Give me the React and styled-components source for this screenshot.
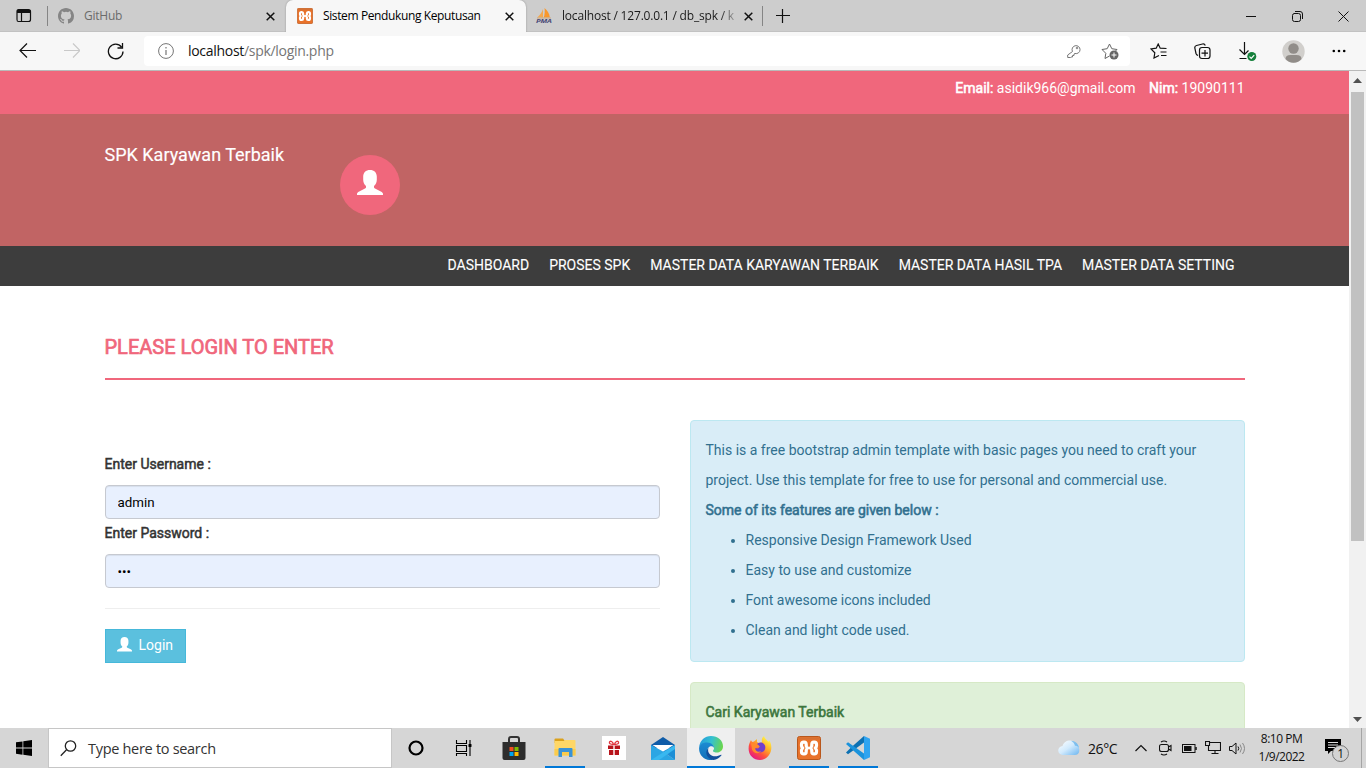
import React from "react";
import styled, { createGlobalStyle, css } from "styled-components";

const GlobalStyle = createGlobalStyle`
  *, *::before, *::after { box-sizing: border-box; }
  body { margin: 0; overflow: hidden; font-family: Roboto, sans-serif; }
  svg { display: block; flex: none; }
`;

const ui = `"Open Sans", "Noto Sans", sans-serif`;

const Screen = styled.div`
  width: 1366px;
  height: 768px;
  display: flex;
  flex-direction: column;
  background: #fff;
  overflow: hidden;
`;

/* ---------- browser chrome ---------- */

const TabStrip = styled.div`
  height: 32px;
  flex: none;
  display: flex;
  background: #cdcdcd;
  box-shadow: inset 0 -1px 0 #c2c2c2;
  font-family: ${ui};
`;

const TabMenu = styled.div`
  width: 48px;
  padding: 8px 0 0 16px;
`;

const Divider = styled.div`
  width: 1px;
  height: 20px;
  margin: 6px 0 0 -1px;
  background: #858585;
`;

const Tab = styled.div`
  width: ${(p) => p.$width}px;
  height: 32px;
  display: flex;
  align-items: center;
  padding: 0 ${(p) => p.$right}px 0 ${(p) => p.$left}px;
  gap: 10px;
  font-size: 12px;
  letter-spacing: ${(p) => p.$spacing}px;
  color: ${(p) => (p.$muted ? "#6b6b6b" : "#1a1a1a")};
  ${(p) =>
    p.$active &&
    css`
      background: #f7f7f7;
      border-radius: 7px 7px 0 0;
      box-shadow: 0 0 2px rgba(0, 0, 0, 0.3);
      color: #000;
    `}
`;

const TabTitle = styled.span`
  flex: 1;
  min-width: 0;
  white-space: nowrap;
  line-height: 20px;
  ${(p) =>
    p.$fade &&
    css`
      mask-image: linear-gradient(90deg, #000 158px, transparent 178px);
    `}
`;

const NewTab = styled.div`
  flex: 1;
  padding: 9px 0 0 13px;
`;

const WindowControls = styled.div`
  display: flex;
  width: 138px;
  & > span {
    width: 46px;
    height: 32px;
    display: grid;
    place-items: center;
  }
`;

const Toolbar = styled.div`
  height: 39px;
  flex: none;
  display: flex;
  align-items: center;
  background: #f7f7f7;
  border-bottom: 1px solid #b9b9b9;
`;

const NavButtons = styled.div`
  width: 144px;
  display: flex;
  align-items: center;
  gap: 27px;
  padding-left: 19px;
`;

const AddressBar = styled.div`
  width: 986px;
  height: 30px;
  display: flex;
  align-items: center;
  background: #fff;
  border-radius: 4px;
  padding: 0 11px 0 14px;
  font-family: ${ui};
  font-size: 14px;
  letter-spacing: -0.3px;
  color: #111;
  em {
    font-style: normal;
    color: #757575;
  }
`;

const Address = styled.span`
  flex: 1;
  padding-left: 14px;
  line-height: 20px;
`;

const AddressIcons = styled.div`
  display: flex;
  align-items: center;
  gap: 20px;
`;

const ToolIcons = styled.div`
  flex: 1;
  display: grid;
  grid-template-columns: 46px 43px 48px 42px 49px;
  justify-items: center;
  align-items: center;
  padding-left: 5px;
`;

/* ---------- page ---------- */

const Viewport = styled.div`
  flex: 1;
  min-height: 0;
  display: flex;
`;

const Page = styled.main`
  width: 1349px;
  overflow: hidden;
  color: #333;
  font-size: 14px;
`;

const Container = styled.div`
  width: 1170px;
  margin: 0 auto;
  padding: 0 15px;
`;

const Strong = styled.strong`
  font-weight: 400;
  -webkit-text-stroke: 0.55px currentColor;
`;

const ContactBar = styled.header`
  height: 43px;
  background: #f0677c;
  color: #fff;
  line-height: 20px;
  padding-top: 7px;
  ${Container} {
    display: flex;
    justify-content: flex-end;
    gap: 13.5px;
  }
`;

const Banner = styled.div`
  height: 132px;
  background: #c16464;
  ${Container} {
    display: flex;
  }
`;

const Brand = styled.div`
  width: 235.5px;
  padding-top: 31px;
  font-size: 18px;
  line-height: 20px;
  color: #fff;
  white-space: nowrap;
  -webkit-text-stroke: 0.15px currentColor;
`;

const Avatar = styled.div`
  width: 60px;
  height: 60px;
  margin-top: 41px;
  padding: 15px 0 0 17px;
  border-radius: 50%;
  background: #f0677c;
`;

const Menu = styled.nav`
  height: 40px;
  background: #3d3d3d;
  ${Container} {
    display: flex;
    justify-content: flex-end;
  }
`;

const MenuItem = styled.a`
  padding: 9px 10px 0;
  line-height: 20px;
  color: #fff;
  white-space: nowrap;
  -webkit-text-stroke: 0.1px currentColor;
`;

const Title = styled.h4`
  margin: 49px 0 40px;
  height: 45px;
  border-bottom: 2px solid #f0677c;
  color: #f0677c;
  font-size: 20px;
  font-weight: 400;
  line-height: 24px;
  -webkit-text-stroke: 0.7px currentColor;
`;

const Columns = styled.div`
  display: grid;
  grid-template-columns: 1fr 1fr;
  gap: 30px;
`;

const Form = styled.form`
  padding-top: 34px;
`;

const Label = styled.label`
  display: block;
  height: 31px;
  line-height: 20px;
  -webkit-text-stroke: 0.5px currentColor;
`;

const Field = styled.input`
  display: block;
  width: 100%;
  height: 34px;
  margin-bottom: 4px;
  padding: 6px 12px;
  border: 1px solid #c6c9d0;
  border-radius: 4px;
  background: #e8f0fe;
  box-shadow: inset 0 1px 1px rgba(0, 0, 0, 0.075);
  font: 13.333px Roboto, sans-serif;
  color: #000;
`;

const Rule = styled.hr`
  margin: 20px 0;
  border: 0;
  border-top: 1px solid #eee;
`;

const LoginButton = styled.button`
  width: 81.5px;
  height: 34px;
  display: flex;
  align-items: center;
  gap: 7px;
  padding: 0 11px 2px;
  border: 1px solid #46b8da;
  background: #5bc0de;
  color: #fff;
  font: 14px/20px Roboto, sans-serif;
  svg {
    margin-bottom: 2px;
  }
`;

const Alert = styled.section`
  margin-bottom: 20px;
  padding: 14px 15px 16px;
  border: 1px solid ${(p) => (p.$success ? "#d6e9c6" : "#bce8f1")};
  border-radius: 4px;
  background: ${(p) => (p.$success ? "#dff0d8" : "#d9edf7")};
  color: ${(p) => (p.$success ? "#3c763d" : "#31708f")};
  line-height: 30px;
  min-height: ${(p) => (p.$success ? "120px" : "0")};
  ul {
    margin: 0;
    padding-left: 40px;
  }
`;

const Scrollbar = styled.div`
  width: 17px;
  display: flex;
  flex-direction: column;
  align-items: center;
  background: #f1f1f1;
`;

const ScrollArrow = styled.span`
  height: ${(p) => (p.$down ? 14 : 21)}px;
  padding-top: ${(p) => (p.$down ? 3 : 7)}px;
`;

const Thumb = styled.div`
  width: 13px;
  height: 449px;
  background: #c1c1c1;
  margin-bottom: auto;
`;

/* ---------- taskbar ---------- */

const Taskbar = styled.footer`
  height: 40px;
  flex: none;
  display: flex;
  background: #d6d6d6;
  font-family: ${ui};
  color: #111;
`;

const Start = styled.div`
  width: 48px;
  display: grid;
  place-items: center;
`;

const SearchBox = styled.div`
  width: 344px;
  height: 40px;
  display: flex;
  align-items: center;
  gap: 11px;
  padding-left: 11px;
  border: 1px solid #c6c6c6;
  background: #fff;
  font-size: 14.5px;
  letter-spacing: -0.3px;
  color: #333;
`;

const TaskButton = styled.div`
  width: ${(p) => p.$width || 49}px;
  height: 40px;
  display: grid;
  place-items: center;
  background: ${(p) => (p.$active ? "#efefef" : "transparent")};
  ${(p) =>
    p.$running &&
    css`
      background-image: linear-gradient(#0078d7, #0078d7);
      background-size: ${p.$active ? "100%" : "40px"} 2px;
      background-position: center bottom;
      background-repeat: no-repeat;
    `}
`;

const Tray = styled.div`
  margin-left: auto;
  display: grid;
  grid-template-columns: 30px 41px 24px 24px 24px 24px 24px 65px 47px 5px;
  align-items: center;
  font-size: 14px;
  letter-spacing: -0.4px;
`;

const TrayIcon = styled.div`
  display: grid;
  place-items: center;
`;

const Clock = styled.div`
  font-size: 12px;
  line-height: 18px;
  letter-spacing: -0.5px;
  text-align: center;
  white-space: nowrap;
`;

const ActionCenter = styled.div`
  position: relative;
  padding: 0 0 2px 11px;
`;

const Badge = styled.span`
  position: absolute;
  left: 18px;
  top: 6px;
  width: 17px;
  height: 17px;
  border: 1px solid #777;
  border-radius: 50%;
  background: #d3d3d3;
  font-size: 12px;
  line-height: 15px;
  text-align: center;
`;

const DesktopEdge = styled.div`
  height: 40px;
  border-left: 1px solid #a5a5a5;
`;

/* ---------- drawings ---------- */

const Line = ({ w = 16, h = w, d, color = "#111", sw = 1, children }) => (
  <svg width={w} height={h} viewBox={`0 0 ${w} ${h}`} fill="none" stroke={color} strokeWidth={sw}>
    {d && <path d={d} />}
    {children}
  </svg>
);

const Close = () => <Line w={9} d="M.7 .7l7.6 7.6M8.300 .7L.7 8.300" sw={1.5} />;

const Person = ({ size }) => (
  <svg width={size} height={size} viewBox="0 0 26 26" fill="#fff">
    <path d="M13 0c4.200 0 6.800 2.600 6.800 6.600v3.200c0 2.600-1 4.800-2.800 6.200v1.300c0 .7.4 1 1 1.300l5.800 2.800c1.500.7 2.200 1.500 2.200 2.600V25H0v-1c0-1.100.7-1.900 2.200-2.600L8 18.600c.6-.3 1-.6 1-1.300V16C7.200 14.600 6.200 12.400 6.200 9.800V6.600C6.200 2.600 8.800 0 13 0z" />
  </svg>
);

const Xampp = ({ size }) => (
  <svg width={size} height={size} viewBox="0 0 24 24">
    <rect x=".5" y=".5" width="23" height="23" rx="2" fill="#e9722a" stroke="#b9571c" />
    <path d="M1.500 1.500h21v2h-21z" fill="#c9703b" opacity=".6" />
    <g fill="none" stroke="#fff" strokeWidth="3.200" strokeLinejoin="round" strokeLinecap="round">
      <path d="M9.200 10V8.300Q9.200 6.100 7.200 6.100H6.700Q4.500 6.100 4.500 8.300v1.400Q4.500 11 5.800 12 4.500 13 4.500 14.300v1.400Q4.500 17.900 6.700 17.900h.5q2 0 2-2.200V14" />
      <path d="M14.800 10V8.300q0-2.200 2-2.200h.5q2.200 0 2.200 2.200v1.400q0 1.300-1.300 2.300 1.300 1 1.300 2.300v1.400q0 2.200-2.200 2.200h-.5q-2 0-2-2.200V14" />
      <path d="M10 12h4M9.200 10q.3 2 2.800 2M14.800 14q-.3-2-2.800-2M14.800 10q-.3 2-2.800 2M9.200 14q.3-2 2.800-2" strokeWidth="2.600" />
    </g>
  </svg>
);

const GitHub = () => (
  <svg width="16" height="16" viewBox="0 0 16 16" fill="#858585">
    <path d="M8 0C3.580 0 0 3.580 0 8c0 3.540 2.290 6.530 5.470 7.590.4.070.55-.17.55-.38 0-.19-.01-.82-.01-1.490-2.010.37-2.530-.49-2.690-.94-.09-.23-.48-.94-.82-1.130-.28-.15-.68-.52-.01-.53.63-.01 1.080.58 1.230.82.72 1.210 1.870.87 2.330.66.070-.52.28-.87.51-1.070-1.780-.2-3.640-.89-3.640-3.950 0-.87.31-1.590.82-2.150-.08-.2-.36-1.020.08-2.120 0 0 .67-.21 2.200.82a7.600 7.600 0 0 1 4 0c1.530-1.040 2.200-.82 2.200-.82.44 1.100.16 1.920.08 2.120.51.56.82 1.270.82 2.150 0 3.070-1.870 3.750-3.650 3.950.29.25.54.73.54 1.480 0 1.070-.01 1.930-.01 2.200 0 .21.15.46.55.38A8 8 0 0 0 16 8c0-4.420-3.580-8-8-8z" />
  </svg>
);

const PmaText = styled.text`
  font: italic 700 6px "Open Sans", sans-serif;
`;

const Pma = () => (
  <svg width="16" height="16" viewBox="0 0 16 16" overflow="visible">
    <path d="M7 1v8.500H1.200C3.800 7.500 5.900 4.500 7 1z" fill="#f4a94f" />
    <path d="M8.500 0c3 2.600 5 5.800 5.400 9.500H7.700C8.800 6.500 9 3 8.500 0z" fill="#f8982d" />
    <path d="M1 10h14" stroke="#c9a982" />
    <PmaText x="0" y="15" fill="#4a4a78" textLength="15.500" lengthAdjust="spacingAndGlyphs">PMA</PmaText>
  </svg>
);

const Store = () => (
  <svg width="24" height="24" viewBox="0 0 24 24">
    <path d="M7 7V3Q7 1 9 1h6q2 0 2 2v4" fill="none" stroke="#333" strokeWidth="2" />
    <path d="M.5 6h23v16q0 2-2 2h-19q-2 0-2-2z" fill="#2d2d2d" />
    <path d="M7.500 11h4v4h-4z" fill="#f25022" />
    <path d="M12.500 11h4v4h-4z" fill="#7fba00" />
    <path d="M7.500 16h4v4h-4z" fill="#00a4ef" />
    <path d="M12.500 16h4v4h-4z" fill="#ffb900" />
  </svg>
);

const Explorer = () => (
  <svg width="22" height="20" viewBox="0 0 22 20">
    <path d="M.5 1.500Q.5.500 1.500.500H9l1.500 2V5H.5z" fill="#dba11c" />
    <path d="M.5 3H10l1-1h9.500q1 0 1 1v14.500H.5z" fill="#ffd767" />
    <path d="M.5 11h21v6.500H.5z" fill="#fbcb4c" />
    <path d="M4.500 19v-8q0-1 1-1h12q1 0 1 1v8H15v-5H8v5z" fill="#3b93d6" />
  </svg>
);

const Gift = () => (
  <svg width="24" height="24" viewBox="0 0 24 24">
    <path d="M0 0h24v24H0z" fill="#fff" />
    <path d="M6 9.500h5.300v3.500H6zM12.700 9.500H18v3.500h-5.300zM7 14h4.300v5H7zM12.700 14H17v5h-4.300z" fill="#b8141b" />
    <path d="M11.500 8.500C8 8.500 7 7.500 7.500 6c.8-1.600 3.300-.5 4 2.500zm1 0c3.500 0 4.500-1 4-2.500-.8-1.600-3.300-.5-4 2.500z" fill="none" stroke="#e2343d" strokeWidth="1.300" />
  </svg>
);

const Mail = () => (
  <svg width="24" height="23" viewBox="0 0 24 23">
    <path d="M0 8L12 0l12 8v3H0z" fill="#0f5ca8" />
    <path d="M1.500 8h21L12 15z" fill="#fff" />
    <path d="M0 8l12 6.500L24 23H0z" fill="#2ba6e4" />
    <path d="M24 8v15L12 14.500z" fill="#1d8fd6" />
    <path d="M24 8L0 23h8L24 12z" fill="#38b8f0" />
  </svg>
);

const Edge = () => (
  <svg width="24" height="24" viewBox="0 0 24 24">
    <defs>
      <linearGradient id="edgeTop" x1="0" y1=".3" x2="1" y2=".5">
        <stop offset="0" stopColor="#249bdc" />
        <stop offset=".5" stopColor="#35c1cf" />
        <stop offset="1" stopColor="#6bd64c" />
      </linearGradient>
      <linearGradient id="edgeLow" x1="0" y1="0" x2="0" y2="1">
        <stop offset="0" stopColor="#1c8bd2" />
        <stop offset="1" stopColor="#1370b9" />
      </linearGradient>
    </defs>
    <path d="M.2 11C.8 4.500 5.800 0 12 0c7 0 12 4.600 12 10.200 0 4-3 6.300-6.300 6.300-2.800 0-4.400-1.100-3.500-2.200 1.900-2.300.7-6-3.900-6.600C6 7 1.500 8 .2 11z" fill="url(#edgeTop)" />
    <path d="M.1 12C.4 8.500 4 6.300 8.500 6.600c3.800.2 6.700 2.700 6.500 5.500-.6-1.700-2.700-2.300-4.200-1.500C6.500 13 7 20.500 14.500 23.700 7 25.500-.3 20.100.1 12z" fill="url(#edgeLow)" />
    <path d="M9.400 12c-1.600 5.500 3.400 9 8.300 8.200 1.700-.3 3-.9 4.300-1.500.5-.2.800.2.500.6-1.900 2.800-4.800 4.400-8 4.600C7 22.500 5.500 15.500 9.400 12z" fill="#114f9b" />
  </svg>
);

const Firefox = () => (
  <svg width="24" height="24" viewBox="0 0 24 24">
    <defs>
      <linearGradient id="fox" x1=".8" y1=".1" x2=".2" y2=".95">
        <stop offset="0" stopColor="#fff044" />
        <stop offset=".35" stopColor="#ffab26" />
        <stop offset=".65" stopColor="#ff513d" />
        <stop offset="1" stopColor="#e31587" />
      </linearGradient>
    </defs>
    <path d="M3 4c.4 1 .8 1.500 1.500 2l1.500-.5L9 3v3l2 1 3-.5C13.500 4 14 1.500 16 0c.3 2.500 3 3.800 4.500 6l.5-2c2 3 2.700 6 2.200 9.500C22.300 19.500 17.700 24 12 24 5.500 24 .5 19 .6 12.500.6 9 1.500 6.500 3 4z" fill="url(#fox)" />
    <path d="M8 9c2-3 7-3.600 9 .5 1.300 4-1.500 7-5 7-3 0-5-2-5-4.500l3 .5 2-2z" fill="#7140cb" />
    <path d="M3 7l6 1 2 1.500-1 1.500-3 1.500c.5 3 3.500 4 6 2.500-2 3.500-7.500 2.500-9-1.500z" fill="#ff8a2b" />
  </svg>
);

const VsCode = () => (
  <svg width="24" height="24" viewBox="0 0 24 24">
    <path d="M0 16.500L4.500 12 18 0v6.500L2 18.300z" fill="#0d71b3" />
    <path d="M0 8l2-1.800L18 17.500V24L7 14.200z" fill="#1b93dc" />
    <path d="M18 0l6 2.800v18.400L18 24z" fill="#2fa4f0" />
  </svg>
);

const Cloud = () => (
  <svg width="22" height="16" viewBox="0 0 22 16">
    <defs>
      <linearGradient id="cloud" x1="0" y1="0" x2="1" y2="1">
        <stop offset="0" stopColor="#fff" />
        <stop offset=".5" stopColor="#d1eafd" />
        <stop offset="1" stopColor="#6bb5f0" />
      </linearGradient>
    </defs>
    <path d="M5 15a4.500 4.500 0 0 1-.5-9C5.500 2.500 8.500.500 12 .500c3 0 5 1.500 6.500 3.500 1.800.3 3 2 2.500 4.500 1 3-.5 6.500-4 6.500z" fill="url(#cloud)" />
    <path d="M13 .8c4 0 7.500 3 7.800 7-.8-1.500-2-2-3.800-2C16.500 3.500 15 2 13 .8z" fill="#5aaee9" opacity=".7" />
  </svg>
);

const tabs = [
  { title: "GitHub", width: 238, left: 10, muted: true, icon: <GitHub />, spacing: -0.25, right: 11 },
  { title: "Sistem Pendukung Keputusan", width: 240, left: 11, active: true, icon: <Xampp size={16} />, spacing: -0.38, right: 12 },
  { title: "localhost / 127.0.0.1 / db_spk / kr", width: 237, left: 10, fade: true, icon: <Pma />, spacing: -0.19, right: 10 },
];

const menu = ["DASHBOARD", "PROSES SPK", "MASTER DATA KARYAWAN TERBAIK", "MASTER DATA HASIL TPA", "MASTER DATA SETTING"];

const features = ["Responsive Design Framework Used", "Easy to use and customize", "Font awesome icons included", "Clean and light code used."];

const Browser = () => (
  <>
    <TabStrip>
      <TabMenu>
        <Line w={16} d="M2.500 1.500h10q2 0 2 2v8q0 2-2 2h-10q-1.500 0-1.500-2v-8q0-2 1.500-2zM5.500 4v9.500" sw={1.200}>
          <path d="M1 3.500h13.500" strokeWidth="3" />
        </Line>
      </TabMenu>
      <Divider />
      {tabs.map((t) => (
        <Tab key={t.title} $width={t.width} $left={t.left} $right={t.right} $active={t.active} $muted={t.muted} $spacing={t.spacing}>
          {t.icon}
          <TabTitle $fade={t.fade}>{t.title}</TabTitle>
          <Close />
        </Tab>
      ))}
      <Divider />
      <NewTab>
        <Line w={14} d="M6.500 0v14M0 6.500h14" sw={1.200} />
      </NewTab>
      <WindowControls>
        <span><Line w={10} d="M0 5.500h10" /></span>
        <span><Line w={11} d="M2 2.500h4.500q2 0 2 2V8.500q0 2-2 2h-4q-2 0-2-2v-4q0-2 2-2M3 .500h5q2.500 0 2.500 2.500v5" /></span>
        <span><Line w={11} d="M.5 .5l10 10M10.500 .5l-10 10" /></span>
      </WindowControls>
    </TabStrip>
    <Toolbar>
      <NavButtons>
        <Line w={17} h={16} d="M1 7.500h16M8 .5L1 7.500l7 7" sw={1.200} />
        <Line w={17} h={16} d="M1 7.500h16M10 .5l7 7-7 7" sw={1.200} color="#c9c9c9" />
        <Line w={17} h={18} d="M14.500 5A7.300 7.300 0 1 0 16 9.500M15.500 1v5h-5" sw={1.300} />
      </NavButtons>
      <AddressBar>
        <Line w={16} color="#757575">
          <circle cx="8" cy="8" r="7.400" />
          <path d="M8 7v5M8 4v1.500" strokeWidth="1.200" />
        </Line>
        <Address>localhost<em>/spk/login.php</em></Address>
        <AddressIcons>
          <Line w={14} h={14} color="#777">
            <path d="M5.500 7.500A4 4 0 1 1 8 9.500l-1 .5v1.500H5.500V13H4l-.5.500H.7v-2.500z" />
            <circle cx="10" cy="4" r=".8" />
          </Line>
          <Line w={18} h={17} color="#666">
            <path d="M8.500 13L4 15.500l.8-5.200L1 6.500l5.200-.8L8.500 1l2.300 4.700 5.200.8-1.500 1.500" />
            <circle cx="13" cy="12" r="4.500" fill="#666" stroke="none" />
            <path d="M13 9.500v5M10.500 12h5" stroke="#fff" />
          </Line>
        </AddressIcons>
      </AddressBar>
      <ToolIcons>
        <Line w={17} h={16} d="M9 12.500L4 15l.8-5.200L1 6l5.200-.8L8.200 1l2 4.200L16.500 5.500M10.500 9h6M11 12.500h5.500" sw={1.200} />
        <Line w={17} h={17} sw={1.200}>
          <path d="M4 12.500Q2.500 12 2 10.500L.8 5Q.5 3 2.500 2.500l6-1.500q2-.5 2.800 1.500M5.500 7q0-2.500 2.500-2.500h5.500q2.500 0 2.500 2.500v6q0 2.500-2.500 2.500H8q-2.500 0-2.500-2.500zM11 7v6.500M7.500 10.200h6.500" />
        </Line>
        <Line w={18} h={19} sw={1.200}>
          <path d="M5.500 0v12M.5 7.500l5 5 4-4M.5 16.500h7" />
          <circle cx="12.800" cy="14.500" r="4.500" fill="#16803c" stroke="none" />
          <path d="M10.500 14.700l1.700 1.700 3-3.200" stroke="#fff" />
        </Line>
        <svg width="23" height="23" viewBox="0 0 23 23">
          <circle cx="11.500" cy="11.500" r="11.200" fill="#d1cfcc" />
          <circle cx="11.500" cy="8.500" r="5.200" fill="#918d89" />
          <path d="M3.500 19q0-4 5-4h6q5 0 5 4-3 3.700-8 3.700T3.500 19z" fill="#918d89" />
        </svg>
        <svg width="14" height="4" viewBox="0 0 14 4"><circle cx="1.800" cy="2" r="1.300" /><circle cx="7" cy="2" r="1.300" /><circle cx="12.200" cy="2" r="1.300" /></svg>
      </ToolIcons>
    </Toolbar>
  </>
);

const LoginPage = () => (
  <Page>
    <ContactBar>
      <Container>
        <span><Strong>Email:</Strong> asidik966@gmail.com</span>
        <span><Strong>Nim:</Strong> 19090111</span>
      </Container>
    </ContactBar>
    <Banner>
      <Container>
        <Brand>SPK Karyawan Terbaik</Brand>
        <Avatar><Person size={26} /></Avatar>
      </Container>
    </Banner>
    <Menu>
      <Container>{menu.map((m) => <MenuItem key={m}>{m}</MenuItem>)}</Container>
    </Menu>
    <Container>
      <Title>PLEASE LOGIN TO ENTER</Title>
      <Columns>
        <Form>
          <Label>Enter Username :</Label>
          <Field defaultValue="admin" />
          <Label>Enter Password :</Label>
          <Field type="password" defaultValue="spk" />
          <Rule />
          <LoginButton type="button"><Person size={15} />Login</LoginButton>
        </Form>
        <div>
          <Alert>
            This is a free bootstrap admin template with basic pages you need to craft your project. Use this template for free to use for personal and commercial use.
            <br />
            <Strong>Some of its features are given below :</Strong>
            <ul>{features.map((f) => <li key={f}>{f}</li>)}</ul>
          </Alert>
          <Alert $success><Strong>Cari Karyawan Terbaik</Strong></Alert>
        </div>
      </Columns>
    </Container>
  </Page>
);

const WindowsTaskbar = () => (
  <Taskbar>
    <Start>
      <svg width="16" height="16" viewBox="0 0 16 16"><path d="M0 2.300l6.500-.9v6.100H0zM7.300 1.300L16 0v7.500H7.300zM0 8.500h6.500v6.200L0 13.800zM7.300 8.500H16V16l-8.700-1.200z" /></svg>
    </Start>
    <SearchBox>
      <Line w={17} h={17} color="#222" sw={1.300}><circle cx="10.500" cy="6" r="5.200" /><path d="M6.500 9.800L.8 15.700" /></Line>
      Type here to search
    </SearchBox>
    <TaskButton $width={48}><Line w={16} color="#000" sw={2.200}><circle cx="8" cy="8" r="6.500" /></Line></TaskButton>
    <TaskButton $width={47}>
      <Line w={17} h={16} color="#000" sw={1.100}>
        <path d="M1.500 0v3.500h10V0M1.500 5.500h10v6h-10zM1.500 16v-2.500h10V16M15 0v16" />
        <path d="M13.500 5.500h3M15 4v3" strokeWidth="2.500" />
      </Line>
    </TaskButton>
    <TaskButton $width={54}><Store /></TaskButton>
    <TaskButton $width={47} $running><Explorer /></TaskButton>
    <TaskButton $width={51}><Gift /></TaskButton>
    <TaskButton $width={47}><Mail /></TaskButton>
    <TaskButton $width={1} />
    <TaskButton $width={48} $running $active><Edge /></TaskButton>
    <TaskButton><Firefox /></TaskButton>
    <TaskButton $width={50} $running><Xampp size={24} /></TaskButton>
    <TaskButton $width={48} $running><VsCode /></TaskButton>
    <Tray>
      <Cloud />
      <span>26°C</span>
      <TrayIcon><Line w={12} h={8} d="M.5 7L6 1.500 11.500 7" sw={1.200} /></TrayIcon>
      <TrayIcon><Line w={13} h={16} d="M2.500 4.500h5q2 0 2 2v3q0 2-2 2h-5q-2 0-2-2v-3q0-2 2-2zM9.500 7l2.500-1.500v5L9.500 9M2 2Q5 0 8 2M2 14q3 2 6 0" sw={1.100} /></TrayIcon>
      <TrayIcon><Line w={15} h={9}><rect x=".5" y=".5" width="12.500" height="8" /><path d="M2 2h7.500v5H2z" fill="#111" stroke="none" /><path d="M14 3v3" strokeWidth="1.500" /></Line></TrayIcon>
      <TrayIcon><Line w={16} h={14} d="M5 1.500h10.500v8H3.500V5M10 9.500v3M6.500 12.500h7M.5 .5h4v4h-4z" sw={1.100} /></TrayIcon>
      <TrayIcon><Line w={17} h={13}><path d="M.5 4.500h2.500l4-3.500v11l-4-3.500H.5z" /><path d="M9 4.500q1.500 2 0 4" /><path d="M11 2.500q3 4 0 8M13.500 1q4 5.500 0 11" stroke="#888" /></Line></TrayIcon>
      <Clock>8:10 PM<br />1/9/2022</Clock>
      <ActionCenter>
        <svg width="16" height="16" viewBox="0 0 16 16"><path d="M0 0h16v12H6l-3 3v-3H0z" /><path d="M3 3.500h10M3 6h10M3 8.500h7" stroke="#ddd" /></svg>
        <Badge>1</Badge>
      </ActionCenter>
      <DesktopEdge />
    </Tray>
  </Taskbar>
);

export default function App() {
  return (
    <Screen>
      <GlobalStyle />
      <Browser />
      <Viewport>
        <LoginPage />
        <Scrollbar>
          <ScrollArrow><svg width="9" height="5" viewBox="0 0 9 5"><path d="M0 5l4.500-5L9 5z" fill="#505050" /></svg></ScrollArrow>
          <Thumb />
          <ScrollArrow $down><svg width="9" height="5" viewBox="0 0 9 5"><path d="M0 0l4.500 5L9 0z" fill="#505050" /></svg></ScrollArrow>
        </Scrollbar>
      </Viewport>
      <WindowsTaskbar />
    </Screen>
  );
}
